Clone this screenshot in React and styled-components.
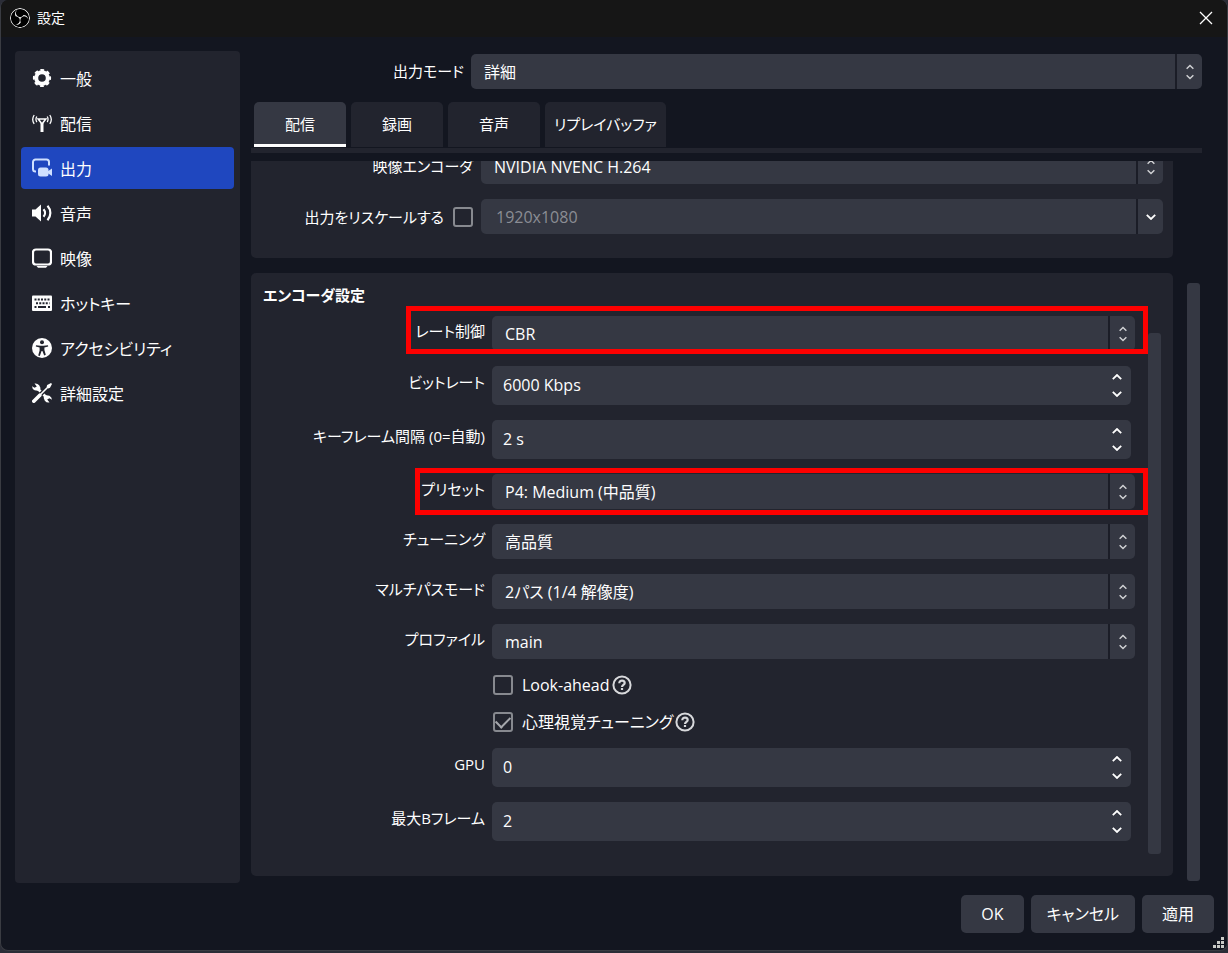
import React, { useState } from 'react'
import styled, { createGlobalStyle, css } from 'styled-components'
import { SiObsstudio } from 'react-icons/si'

const GlobalStyle = createGlobalStyle`
  * {
    box-sizing: border-box;
  }
  body {
    margin: 0;
    background: #2b2d37;
    color: #fefefe;
    font-family: 'Open Sans', 'Noto Sans CJK JP', sans-serif;
    font-size: 16px;
    line-height: 24px;
    font-feature-settings: 'palt';
  }
  button,
  input,
  select {
    margin: 0;
    border: 0;
    padding: 0;
    color: inherit;
    font: inherit;
    font-feature-settings: inherit;
  }
`

/* icons */

const Icon = ({ size = 20, children }) => (
  <svg width={size} height={size} viewBox='0 0 20 20' fill='none' aria-hidden='true'>
    {children}
  </svg>
)

const GearIcon = () => (
  <Icon>
    <circle cx='10' cy='10' r='5.800' stroke='currentColor' strokeWidth='4' />
    <circle
      cx='10'
      cy='10'
      r='7.900'
      stroke='currentColor'
      strokeWidth='2.400'
      strokeDasharray='3.600 2.605'
      strokeDashoffset='1.800'
    />
  </Icon>
)

const AntennaIcon = () => (
  <Icon>
    <path d='M6.200 6h7.600L10 11z' stroke='currentColor' strokeWidth='1.600' />
    <path d='M10 10v9' stroke='currentColor' strokeWidth='3' />
    <path
      d='M4.800 3.500C3.700 5.300 3.700 7.300 4.800 9.100M15.200 3.500c1.100 1.800 1.100 3.800 0 5.600M2.200 2c-2 3-2 6 0 8.800M17.800 2c2 3 2 6 0 8.800'
      stroke='currentColor'
      strokeWidth='1.300'
    />
  </Icon>
)

const OutputIcon = () => (
  <Icon>
    <path
      d='M4 13.500H3.500A2.500 2.500 0 0 1 1 11V4a2.500 2.500 0 0 1 2.500-2.500h11A2.500 2.500 0 0 1 17 4v3.500'
      stroke='#cfe0ff'
      strokeWidth='2'
    />
    <rect x='6' y='9.500' width='10.500' height='9' rx='2.500' fill='#cfe0ff' />
    <path d='M15.500 13.500l4.500-3v7.500l-4.500-3z' fill='#cfe0ff' />
  </Icon>
)

const SpeakerIcon = () => (
  <Icon>
    <path d='M0 6.500h3.500L9 1.500v17l-5.500-5H0z' fill='currentColor' />
    <path
      d='M11.500 6.200c2 2.200 2 5.400 0 7.600M15.500 2.800c3.800 4.200 3.800 10.200 0 14.400'
      stroke='currentColor'
      strokeWidth='2.200'
    />
  </Icon>
)

const MonitorIcon = () => (
  <Icon>
    <rect x='1' y='1.500' width='18' height='15' rx='3' stroke='currentColor' strokeWidth='2.200' />
    <path d='M4.500 18h11L14 19.800H6z' fill='currentColor' />
  </Icon>
)

const KeyboardIcon = () => (
  <Icon>
    <rect y='2.500' width='20' height='15.500' rx='1' fill='currentColor' />
    <path
      d='M2.500 6.500h15M4 10.200h13.500'
      stroke='#22242e'
      strokeWidth='2'
      strokeDasharray='2 1.250'
    />
    <path d='M2.500 14h2M6 14h8M16 14h2' stroke='#22242e' strokeWidth='1.800' />
  </Icon>
)

const AccessIcon = () => (
  <Icon>
    <circle cx='10' cy='10' r='10' fill='currentColor' />
    <circle cx='10' cy='4.300' r='2' fill='#22242e' />
    <path
      d='M4 7.200l4.500.6h3l4.500-.6.2 1.400-3.800 1v2.400l1.400 4.800-1.600.6L10.400 13h-.8L7.800 18l-1.600-.6 1.400-4.800V9.600l-3.800-1z'
      fill='#22242e'
    />
  </Icon>
)

const ToolsIcon = () => (
  <Icon>
    <path d='M5.500 5.500l9.500 9.500' stroke='currentColor' strokeWidth='2.600' />
    <path
      d='M2.500.5A5 5 0 0 1 8 7.200L7 8 2.600 7.300A5 5 0 0 1 0 3.200l2.600 1.600L4.800 3.600zM17.500 19.500A5 5 0 0 1 12 12.800l1-.8 4.400.7a5 5 0 0 1 2.600 4.100l-2.600-1.600-2.200 1.200z'
      fill='currentColor'
    />
    <path d='M17 3L8.500 11.500' stroke='#22242e' strokeWidth='4' />
    <path d='M16.500 3.500L8 12' stroke='currentColor' strokeWidth='1.600' />
    <path d='M19 0l1 1-2 3.800-1.600.6-1.800-1.800.6-1.600z' fill='currentColor' />
    <path d='M1.800 18.200l6-6' stroke='currentColor' strokeWidth='3.600' strokeLinecap='round' />
  </Icon>
)

const HelpIcon = () => (
  <Icon>
    <circle cx='10' cy='10' r='8.600' stroke='#d8d9dc' strokeWidth='2' />
    <path
      d='M7.300 8.200C7.300 6.600 8.400 5.600 10 5.600s2.700 1 2.700 2.400c0 1.900-2.700 2-2.700 4'
      stroke='#d8d9dc'
      strokeWidth='2.200'
    />
    <path d='M8.900 13h2.200v2H8.900z' fill='#d8d9dc' />
  </Icon>
)

const Chevron = ({ up, width = 10 }) => (
  <svg width={width} height='6' viewBox='0 0 10 6' fill='none' aria-hidden='true'>
    <path
      d={up ? 'M.8 5.200L5 1l4.200 4.200' : 'M.8.8L5 5 9.200.8'}
      stroke='currentColor'
      strokeWidth='1.800'
    />
  </svg>
)

/* window */

const Window = styled.div`
  position: relative;
  display: flex;
  flex-direction: column;
  height: calc(100vh - 2px);
  border: 1px solid #3a3c42;
  border-top: 0;
  border-radius: 8px;
  background: #131620;
  overflow: hidden;
`

const TitleBar = styled.header`
  display: flex;
  align-items: center;
  gap: 7px;
  height: 37px;
  flex-shrink: 0;
  padding: 0 14px 1px 9px;
  background: #161616;

  h1 {
    flex: 1;
    margin: 0;
    font-size: 14px;
    font-weight: 400;
  }
`

const Logo = styled(SiObsstudio)`
  width: 20px;
  height: 20px;
  border-radius: 50%;
  background: #000;
`

const CloseButton = styled.button`
  display: flex;
  background: none;
`

const Main = styled.div`
  flex: 1;
  min-height: 0;
  display: flex;
  gap: 11px;
  padding: 14px 25px 0 14px;
`

const Sidebar = styled.nav`
  display: flex;
  flex-direction: column;
  gap: 3px;
  width: 225px;
  flex-shrink: 0;
  padding: 6px;
  border-radius: 4px;
  background: #22242e;
`

const NavItem = styled.a`
  display: flex;
  align-items: center;
  gap: 8px;
  height: 42px;
  padding: 0 11px;
  border-radius: 4px;
  color: inherit;
  text-decoration: none;
  background: ${({ $active }) => ($active ? '#1f47bf' : 'transparent')};

  span {
    padding-top: 2px;
  }
`

const Content = styled.main`
  flex: 1;
  min-width: 0;
  display: flex;
  flex-direction: column;
  padding-top: 3px;
`

/* form parts */

const FormRow = styled.div`
  position: relative;
  display: grid;
  grid-template-columns: ${({ $label }) => $label}px minmax(0, 1fr);
  column-gap: ${({ $gap = 7 }) => $gap}px;
  align-items: center;
`

const Label = styled.label`
  padding-bottom: ${({ $drop = 6 }) => $drop}px;
  font-size: 15px;
  text-align: right;
  white-space: nowrap;
`

const controlBox = css`
  display: flex;
  border-radius: 5px;
  background: #353843;
  overflow: hidden;
`

const SelectBox = styled.div`
  ${controlBox}
  position: relative;
  height: 35px;

  select {
    flex: 1;
    appearance: none;
    padding: 0 36px 0 13px;
    background: none;
    outline: none;
  }
  option {
    background: #353843;
  }
`

const SelectArrows = styled.span`
  position: absolute;
  inset: 0 0 0 auto;
  display: flex;
  flex-direction: column;
  align-items: center;
  justify-content: center;
  gap: 4px;
  width: 27px;
  border-left: 2px solid #1b1d27;
  color: #d0d1d4;
  pointer-events: none;
`

const ComboBox = styled.div`
  ${controlBox}
  height: 35px;

  input {
    flex: 1;
    min-width: 0;
    padding: 0 15px;
    background: none;
    color: #8b8d94;
  }
  button {
    width: 27px;
    border-left: 2px solid #1b1d27;
    background: none;
  }
  svg {
    display: block;
    margin: auto;
  }
`

const SpinBox = styled.div`
  ${controlBox}
  height: 39px;
  margin-right: 4px;

  input {
    flex: 1;
    min-width: 0;
    padding: 0 11px 2px;
    background: none;
    outline: none;
  }
`

const SpinButtons = styled.div`
  display: flex;
  flex-direction: column;
  justify-content: center;
  width: 28px;

  button {
    display: flex;
    align-items: center;
    justify-content: center;
    height: 17px;
    background: none;
  }
`

const Checkbox = styled.input.attrs({ type: 'checkbox' })`
  appearance: none;
  flex-shrink: 0;
  display: grid;
  place-content: center;
  width: 20px;
  height: 20px;
  border: 2px solid #87898f;
  border-radius: 3px;

  &:checked::before {
    content: '';
    width: 12px;
    height: 7px;
    margin-bottom: 3px;
    border: solid #a5a7ac;
    border-width: 0 0 2px 2px;
    transform: rotate(-45deg);
  }
`

const CheckRow = styled.div`
  display: flex;
  align-items: center;
  gap: 2px;
  height: 22px;
  padding-left: 230px;

  label {
    padding-left: 7px;
  }
`

const RescaleLabel = styled.div`
  display: flex;
  align-items: center;
  justify-content: flex-end;
  gap: 9px;
  font-size: 15px;
`

const Highlight = styled.span`
  position: absolute;
  top: ${({ $top }) => -$top}px;
  right: -13px;
  bottom: ${({ $bottom }) => -$bottom}px;
  left: ${({ $left }) => $left}px;
  border: 5px solid #fe0000;
  pointer-events: none;
`

/* tabs and groups */

const Tabs = styled.div`
  display: flex;
  gap: 5px;
  margin-top: 13px;
  padding-left: 3px;
  padding-bottom: 1px;
`

const Tab = styled.button`
  min-width: 92px;
  height: 45px;
  padding: 2px 9px 0;
  border-bottom: 3px solid ${({ $active }) => ($active ? '#fefefe' : '#22242e')};
  border-radius: 5px 5px 0 0;
  background: ${({ $active }) => ($active ? '#353843' : '#22242e')};
  font-size: 15px;
`

const Divider = styled.hr`
  width: 100%;
  height: 5px;
  flex-shrink: 0;
  margin: 0 0 8px;
  border: 0;
  background: #22242e;
`

const ScrollView = styled.div`
  flex: 1;
  min-height: 0;
  display: flex;
  gap: 14px;
  padding-right: 2px;
  overflow: hidden;
`

/* scrolled to its end, so the first rows run off the top edge */
const ScrollContent = styled.div`
  flex: 1;
  min-width: 0;
  display: flex;
  flex-direction: column;
  justify-content: flex-end;
  gap: 15px;
  padding-bottom: 7px;
`

const ScrollThumb = styled.div`
  width: 13px;
  margin: ${({ $top }) => $top}px 0 ${({ $bottom = 0 }) => $bottom}px;
  border-radius: 3px;
  background: #353843;
`

const Group = styled.section`
  padding: 10px ${({ $right }) => $right}px ${({ $bottom }) => $bottom}px 12px;
  border-radius: 5px;
  background: #22242e;

  h2 {
    margin: 0 0 9px;
    font-size: 15px;
    font-weight: 600;
  }
`

const Rows = styled.div`
  flex: 1;
  min-width: 0;
  display: flex;
  flex-direction: column;
  gap: 15px;
`

const EncoderRows = styled(Rows)`
  padding-bottom: 13px;
`

const GroupBody = styled.div`
  display: flex;
  gap: 13px;
`

const Footer = styled.footer`
  display: flex;
  justify-content: flex-end;
  gap: 7px;
  flex-shrink: 0;
  padding: 12px 13px 17px;
`

const Button = styled.button`
  height: 38px;
  padding: 0 ${({ $wide }) => ($wide ? 16 : 20)}px;
  border-radius: 5px;
  background: #353843;
`

const SizeGrip = styled.svg`
  position: absolute;
  right: 3px;
  bottom: 2px;
`

const Select = ({ id, value }) => (
  <SelectBox>
    <select id={id} defaultValue={value}>
      <option>{value}</option>
    </select>
    <SelectArrows>
      <Chevron up width={8} />
      <Chevron width={8} />
    </SelectArrows>
  </SelectBox>
)

const Spin = ({ id, value, unit = '' }) => {
  const [number, setNumber] = useState(value)
  return (
    <SpinBox>
      <input
        id={id}
        value={`${number}${unit}`}
        onChange={(e) => setNumber(parseInt(e.target.value, 10) || 0)}
      />
      <SpinButtons>
        <button type='button' aria-label='増やす' onClick={() => setNumber(number + 1)}>
          <Chevron up />
        </button>
        <button type='button' aria-label='減らす' onClick={() => setNumber(number - 1)}>
          <Chevron />
        </button>
      </SpinButtons>
    </SpinBox>
  )
}

const navItems = [
  { text: '一般', icon: <GearIcon /> },
  { text: '配信', icon: <AntennaIcon /> },
  { text: '出力', icon: <OutputIcon /> },
  { text: '音声', icon: <SpeakerIcon /> },
  { text: '映像', icon: <MonitorIcon /> },
  { text: 'ホットキー', icon: <KeyboardIcon /> },
  { text: 'アクセシビリティ', icon: <AccessIcon /> },
  { text: '詳細設定', icon: <ToolsIcon /> },
]

const tabs = ['配信', '録画', '音声', 'リプレイバッファ']

const encoderRows = [
  { id: 'rate', label: 'レート制御', value: 'CBR', mark: { $top: 10, $bottom: 3, $left: 143 } },
  { id: 'bitrate', label: 'ビットレート', spin: true, value: 6000, unit: ' Kbps' },
  { id: 'keyint', label: 'キーフレーム間隔 (0=自動)', spin: true, value: 2, unit: ' s' },
  {
    id: 'preset',
    label: 'プリセット',
    value: 'P4: Medium (中品質)',
    mark: { $top: 6, $bottom: 6, $left: 152 },
  },
  { id: 'tuning', label: 'チューニング', value: '高品質' },
  { id: 'multipass', label: 'マルチパスモード', value: '2パス (1/4 解像度)' },
  { id: 'profile', label: 'プロファイル', value: 'main' },
  { id: 'lookahead', label: 'Look-ahead', check: true, value: false },
  { id: 'psycho', label: '心理視覚チューニング', check: true, value: true },
  { id: 'gpu', label: 'GPU', spin: true, value: 0 },
  { id: 'bframes', label: '最大Bフレーム', spin: true, value: 2 },
]

const EncoderRow = ({ id, label, value, unit, spin, check, mark }) => {
  if (check) {
    return (
      <CheckRow>
        <Checkbox id={id} defaultChecked={value} />
        <label htmlFor={id}>{label}</label>
        <HelpIcon />
      </CheckRow>
    )
  }
  return (
    <FormRow $label={222}>
      <Label htmlFor={id} $drop={spin ? 8 : 6}>
        {label}
      </Label>
      {spin ? <Spin id={id} value={value} unit={unit} /> : <Select id={id} value={value} />}
      {mark && <Highlight {...mark} />}
    </FormRow>
  )
}

const App = () => {
  const [activeTab, setActiveTab] = useState(0)

  return (
    <>
      <GlobalStyle />
      <Window>
        <TitleBar>
          <Logo />
          <h1>設定</h1>
          <CloseButton type='button' aria-label='閉じる'>
            <svg width='14' height='14' viewBox='0 0 14 14'>
              <path d='M1 1l12 12M13 1L1 13' stroke='#fff' strokeWidth='1.300' />
            </svg>
          </CloseButton>
        </TitleBar>

        <Main>
          <Sidebar>
            {navItems.map(({ text, icon }) => (
              <NavItem key={text} href='#' $active={text === '出力'}>
                {icon}
                <span>{text}</span>
              </NavItem>
            ))}
          </Sidebar>

          <Content>
            <FormRow $label={213}>
              <Label htmlFor='mode' $drop={2}>
                出力モード
              </Label>
              <Select id='mode' value='詳細' />
            </FormRow>

            <Tabs role='tablist'>
              {tabs.map((tab, i) => (
                <Tab
                  key={tab}
                  type='button'
                  role='tab'
                  aria-selected={i === activeTab}
                  $active={i === activeTab}
                  onClick={() => setActiveTab(i)}
                >
                  {tab}
                </Tab>
              ))}
            </Tabs>
            <Divider />

            <ScrollView>
              <ScrollContent>
                <Group $right={10} $bottom={24}>
                  <Rows>
                    <FormRow $label={210} $gap={8}>
                      <Label htmlFor='encoder' $drop={2}>
                        映像エンコーダ
                      </Label>
                      <Select id='encoder' value='NVIDIA NVENC H.264' />
                    </FormRow>
                    <FormRow $label={210} $gap={8}>
                      <RescaleLabel>
                        <label htmlFor='rescale'>出力をリスケールする</label>
                        <Checkbox id='rescale' />
                      </RescaleLabel>
                      <ComboBox>
                        <input aria-label='解像度' value='1920x1080' disabled readOnly />
                        <button type='button' aria-label='解像度を選択'>
                          <Chevron />
                        </button>
                      </ComboBox>
                    </FormRow>
                  </Rows>
                </Group>

                <Group $right={12} $bottom={22}>
                  <h2>エンコーダ設定</h2>
                  <GroupBody>
                    <EncoderRows>
                      {encoderRows.map((row) => (
                        <EncoderRow key={row.id} {...row} />
                      ))}
                    </EncoderRows>
                    <ScrollThumb $top={17} />
                  </GroupBody>
                </Group>
              </ScrollContent>
              <ScrollThumb $top={122} $bottom={2} />
            </ScrollView>
          </Content>
        </Main>

        <Footer>
          <Button type='button'>OK</Button>
          <Button type='button' $wide>
            キャンセル
          </Button>
          <Button type='button'>適用</Button>
        </Footer>
        <SizeGrip width='11' height='11' viewBox='0 0 11 11' fill='#c9cac6' aria-hidden='true'>
          <path d='M8 0h3v3H8zM4 4h3v3H4zM8 4h3v3H8zM0 8h3v3H0zM4 8h3v3H4zM8 8h3v3H8z' />
        </SizeGrip>
      </Window>
    </>
  )
}

export default App
